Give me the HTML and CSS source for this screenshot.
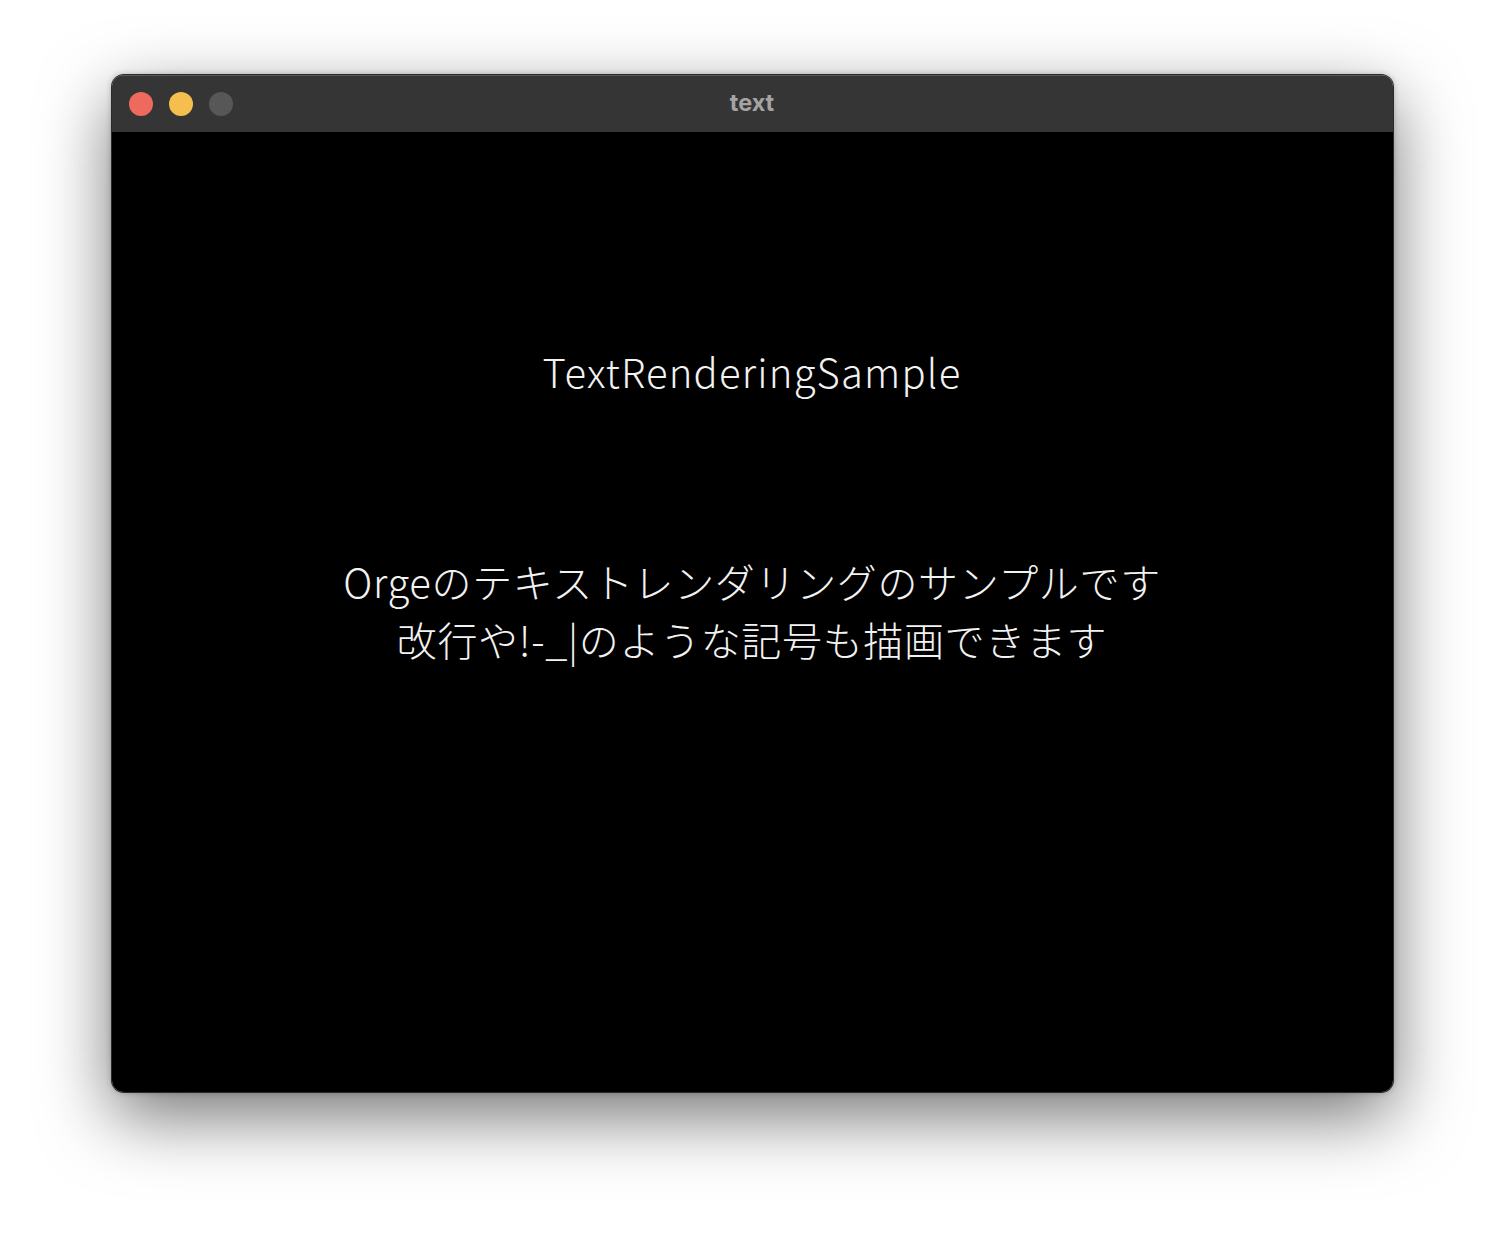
FILE: index.html
```html
<!DOCTYPE html>
<html lang="ja">
<head>
<meta charset="utf-8">
<title>text</title>
<link rel="stylesheet" href="styles.css">
</head>
<body>
<div class="window">
  <div class="titlebar">
    <div class="lights">
      <span class="light red"></span>
      <span class="light yellow"></span>
      <span class="light gray"></span>
    </div>
    <div class="title">text</div>
  </div>
  <div class="content">
    <div class="heading">TextRenderingSample</div>
    <div class="body-text">
      <div class="line">Orgeのテキストレンダリングのサンプルです</div>
      <div class="line">改行や!-_|のような記号も描画できます</div>
    </div>
  </div>
</div>
</body>
</html>
```
FILE: styles.css
```css
html, body {
  margin: 0;
  padding: 0;
  background: #ffffff;
}
body {
  width: 1504px;
  height: 1240px;
  padding-top: 75px;
  box-sizing: border-box;
  overflow: hidden;
}
.window {
  width: 1281px;
  height: 1017px;
  margin: 0 auto;
  border-radius: 12px;
  overflow: hidden;
  display: flex;
  flex-direction: column;
  box-shadow: 0 0 0 1px #2a2a2a, 0 24px 70px rgba(0,0,0,0.55), 0 0 6px rgba(0,0,0,0.3);
  position: relative;
}
.titlebar {
  height: 57px;
  background: #353535;
  display: flex;
  align-items: center;
  position: relative;
  box-shadow: inset 0 1px 0 #5a5a5a;
}
.lights {
  display: flex;
  gap: 16px;
  padding-left: 17px;
}
.light {
  width: 24px;
  height: 24px;
  border-radius: 50%;
  display: block;
}
.red { background: #ee6a5f; }
.yellow { background: #f5be4f; }
.gray { background: #575757; }
.title {
  position: absolute;
  left: 0;
  right: 0;
  top: 0;
  bottom: 0;
  display: flex;
  align-items: center;
  justify-content: center;
  font-family: "Inter", "Liberation Sans", sans-serif;
  font-weight: 700;
  font-size: 23.5px;
  color: #a4a4a4;
  padding-bottom: 2px;
}
.content {
  flex: 1;
  background: #000000;
  color: #f2f2f2;
  display: flex;
  flex-direction: column;
  align-items: center;
  font-family: "Noto Sans CJK JP", sans-serif;
  font-weight: 300;
  padding-top: 211px;
}
.heading {
  font-size: 40px;
  line-height: 56px;
  letter-spacing: 1.2px;
}
.body-text {
  margin-top: 153px;
  display: flex;
  flex-direction: column;
  align-items: center;
  font-size: 40px;
  line-height: 58px;
  letter-spacing: 0.65px;
}
```
